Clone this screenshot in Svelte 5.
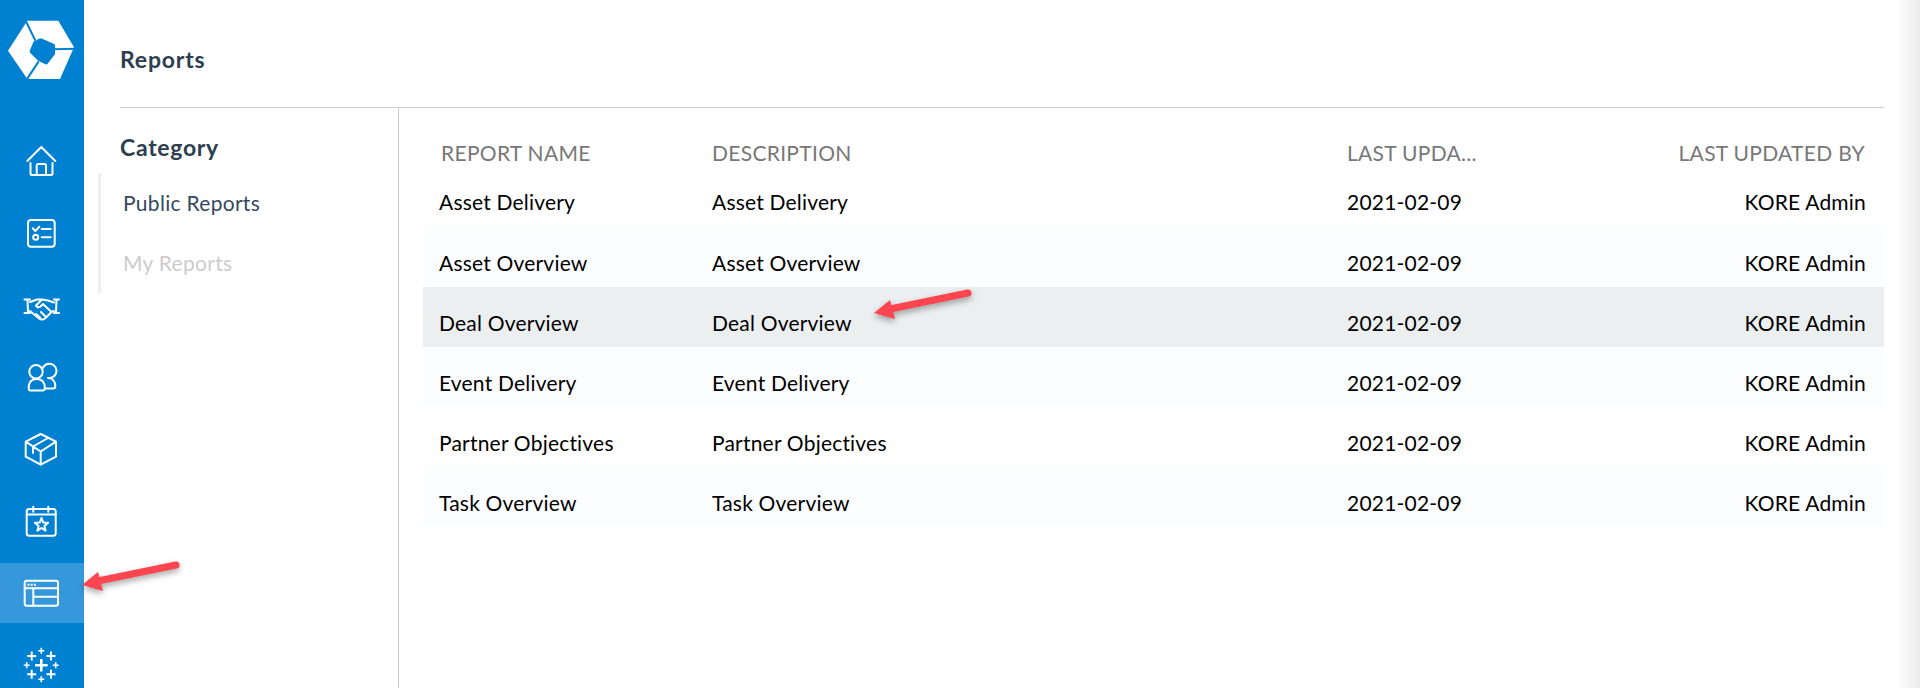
<script>
	const rows = [
		{ name: 'Asset Delivery' },
		{ name: 'Asset Overview' },
		{ name: 'Deal Overview', active: true },
		{ name: 'Event Delivery' },
		{ name: 'Partner Objectives' },
		{ name: 'Task Overview' }
	];
</script>

<div class="page">
	<nav class="sidebar">
		<div class="logo">
			<svg viewBox="0 0 210 240" width="70" height="80" aria-hidden="true">
				<polygon fill="#fff" points="58,32 151,32 198,112 156,207 58,207 0,122" />
				<path class="logo-cut" d="M52 30L82 92M200 116L138 118M92 154L56 209" />
				<polygon class="logo-blob" points="98,92 134,108 134,130 114,156 94,146 72,124 82,100" />
			</svg>
		</div>
		<a class="item" href="#home">
			<svg viewBox="0 0 44 44" width="44" height="44" aria-hidden="true">
				<path d="M7.3 22L21.3 8L35.3 22M10.5 24V34.5Q10.5 36 12 36H31Q32.5 36 32.5 34.5V24M16.7 36V26.5Q16.7 25 18 25H24.5Q26 25 26 26.5V36" />
			</svg>
		</a>
		<a class="item" href="#tasks">
			<svg viewBox="0 0 44 44" width="44" height="44" aria-hidden="true">
				<rect x="8" y="9" width="26.7" height="26.7" rx="3" />
				<path d="M12.7 17.3L15.3 20L19.3 15.7M21.7 18H30.7M21.7 26.3H30.7" />
				<circle cx="15.7" cy="26.3" r="2.5" />
			</svg>
		</a>
		<a class="item" href="#deals">
			<svg viewBox="0 0 44 44" width="44" height="44" aria-hidden="true">
				<path d="M4.5 16.5H10M4.5 30H10M7.5 16.5L8 30M39 16.5H34M39 30H34M36.5 16.5L36 30" />
				<path d="M10 19L17 16.5H22L28 17.5L34 19.5M22 16.5L16 22.5Q17.5 25.5 20.5 23.5L23 21L31.5 29L34 28M10 28L19 35.5Q22 37.5 25 35.5L31.5 29M16 31L20 34.5M21 29L25 33" />
			</svg>
		</a>
		<a class="item" href="#people">
			<svg viewBox="0 0 44 44" width="44" height="44" aria-hidden="true">
				<circle cx="16" cy="16.7" r="6.7" />
				<path d="M22.5 13.5A7.2 7.2 0 1 1 28 23" />
				<path d="M10.5 35.5H22.5Q24.8 35.5 24.8 33Q24.8 24 16.7 24Q8.7 24 8.7 33Q8.7 35.5 10.5 35.5Z" />
				<path d="M25 33.5H33Q35.3 33.5 35.3 31Q35.3 26 31 23.5" />
			</svg>
		</a>
		<a class="item" href="#assets">
			<svg viewBox="0 0 44 44" width="44" height="44" aria-hidden="true">
				<path d="M20.7 7L36 14.7V29.7L20.7 37.7L5.7 29.7V14.7ZM5.7 14.7L20.7 24.5L36 14.7M20.7 24.5V37.7M13 19.5L28 11M13 19.5V26" />
			</svg>
		</a>
		<a class="item" href="#events">
			<svg viewBox="0 0 44 44" width="44" height="44" aria-hidden="true">
				<rect x="6.7" y="10" width="29" height="26.7" rx="2.5" />
				<path d="M6.7 15.5H35.7M13.3 7.7V12.7M28.3 7.7V12.7" />
				<path d="M21.5 19L23.3 23.6L28.2 23.8L24.4 26.9L25.6 31.7L21.5 29L17.4 31.7L18.6 26.9L14.8 23.8L19.7 23.6Z" />
			</svg>
		</a>
		<a class="item active" href="#reports">
			<svg viewBox="0 0 44 44" width="44" height="44" aria-hidden="true">
				<rect x="4.7" y="9.7" width="33.3" height="25" rx="2" />
				<path d="M4.7 17.3H38M13.3 17.3V34.7M13.3 25.7H38" />
				<path class="dots" d="M7.5 13.7H9.5M10.7 13.7H12.7M13.9 13.7H15.9" />
			</svg>
		</a>
		<a class="item" href="#tableau">
			<svg viewBox="0 0 44 44" width="44" height="44" aria-hidden="true">
				<path class="thick" d="M21.3 16V28.6M15 22.3H27.6" />
				<path class="mid" d="M11.7 8.5V17.5M7.2 13H16.2M31 8.5V17.5M26.5 13H35.5M11.7 26.8V35.8M7.2 31.3H16.2M31 26.8V35.8M26.5 31.3H35.5" />
				<path class="thin" d="M21.3 4.7V10.7M18.3 7.7H24.3M21.3 33.3V39.3M18.3 36.3H24.3M6.7 19.3V25.3M3.7 22.3H9.7M35.7 19.3V25.3M32.7 22.3H38.7" />
			</svg>
		</a>
	</nav>

	<main class="main">
		<header class="topbar">
			<h1>Reports</h1>
		</header>
		<div class="body">
			<aside class="categories">
				<h2>Category</h2>
				<ul>
					<li class="current">Public Reports</li>
					<li>My Reports</li>
				</ul>
			</aside>
			<section class="table">
				<div class="thead">
					<span>REPORT NAME</span>
					<span>DESCRIPTION</span>
					<span>LAST UPDA...</span>
					<span class="end">LAST UPDATED BY</span>
				</div>
				{#each rows as row}
					<div class="row" class:active={row.active}>
						<span>{row.name}</span>
						<span>{row.name}</span>
						<span>2021-02-09</span>
						<span class="end">KORE Admin</span>
					</div>
				{/each}
			</section>
		</div>
	</main>

	<div class="edge"></div>

	<!-- annotation arrows on top of the screenshot -->
	<svg class="arrow arrow-nav" viewBox="0 0 110 40" width="110" height="40" aria-hidden="true">
		<g>
			<line x1="96" y1="6" x2="18" y2="22" />
			<polygon points="2,26 18,13 23,32" />
		</g>
	</svg>
	<svg class="arrow arrow-row" viewBox="0 0 110 40" width="110" height="40" aria-hidden="true">
		<g>
			<line x1="96" y1="6" x2="18" y2="22" />
			<polygon points="2,26 18,13 23,32" />
		</g>
	</svg>
</div>

<style>
	:global(body) {
		margin: 0;
		background: #fff;
	}

	.page {
		position: relative;
		display: flex;
		height: 688px;
		overflow: hidden;
		font-family: Lato, 'Noto Sans', sans-serif;
		font-size: 21px;
		letter-spacing: 0.3px;
		color: #000;
	}

	.sidebar {
		flex: 0 0 84px;
		display: flex;
		flex-direction: column;
		gap: 12px;
		background: #0080d0;
	}

	.logo {
		flex: 0 0 119px;
		padding: 10px 0 0 8px;
		box-sizing: border-box;
		line-height: 0;
	}

	.logo-cut {
		fill: none;
		stroke: #0080d0;
		stroke-width: 6;
	}

	.logo-blob {
		fill: #0080d0;
		stroke: #0080d0;
		stroke-width: 14;
		stroke-linejoin: round;
	}

	.item {
		flex: 0 0 60px;
		display: flex;
		align-items: center;
		padding-left: 20px;
	}

	.item.active {
		background: #3598db;
	}

	.item svg {
		fill: none;
		stroke: #fff;
		stroke-width: 2;
		stroke-linecap: round;
		stroke-linejoin: round;
	}

	.item .thick {
		stroke-width: 2.6;
		stroke-linecap: butt;
	}

	.item .mid {
		stroke-width: 2;
		stroke-linecap: butt;
	}

	.item .thin {
		stroke-width: 1.6;
		stroke-linecap: butt;
	}

	.item .dots {
		stroke-linecap: butt;
	}

	.main {
		flex: 1;
		display: flex;
		flex-direction: column;
		padding: 0 36px;
		min-width: 0;
	}

	.topbar {
		height: 107px;
		border-bottom: 1px solid #ccc;
		flex: none;
	}

	h1 {
		margin: 0;
		padding-top: 45px;
		font-size: 23px;
		font-weight: 700;
		line-height: 28px;
		letter-spacing: 0.8px;
		color: #2c3e50;
	}

	.body {
		flex: 1;
		display: flex;
	}

	.categories {
		flex: 0 0 278px;
		border-right: 1px solid #ccc;
	}

	h2 {
		margin: 0;
		padding-top: 25px;
		font-size: 23px;
		font-weight: 700;
		line-height: 28px;
		letter-spacing: 0.7px;
		color: #2c3e50;
	}

	ul {
		list-style: none;
		margin: 12px 0 0 -22px;
		padding: 0;
		width: 120px;
		border-left: 3px solid #eee;
	}

	li {
		height: 60px;
		padding: 18px 0 0 22px;
		box-sizing: border-box;
		line-height: 24px;
		white-space: nowrap;
		color: #ccc;
	}

	li.current {
		color: #34495e;
	}

	.table {
		flex: 1;
		padding-left: 24px;
	}

	.thead,
	.row {
		display: grid;
		grid-template-columns: 273px 635px 1fr auto;
		padding-left: 16px;
		padding-right: 18px;
	}

	.thead {
		height: 59px;
		padding-top: 32px;
		box-sizing: border-box;
		line-height: 26px;
		color: #777;
		padding-right: 19px;
	}

	.thead span:first-child {
		padding-left: 2px;
	}

	.row {
		height: 60px;
		padding-top: 24px;
		box-sizing: border-box;
		line-height: 24px;
		letter-spacing: 0.2px;
		align-content: start;
	}

	.thead + .row {
		padding-top: 23px;
	}

	.row:nth-child(odd) {
		background: #fcfdfe;
	}

	.row.active {
		background: #ebeff0;
	}

	.end {
		text-align: right;
	}

	.edge {
		position: absolute;
		top: 0;
		right: 0;
		bottom: 0;
		width: 24px;
		background: linear-gradient(to right, rgba(235, 235, 235, 0), #ebebeb);
	}

	.arrow {
		position: absolute;
		overflow: visible;
		filter: drop-shadow(0 3px 3px rgba(0, 0, 0, 0.35));
	}

	.arrow line {
		stroke: #ff4550;
		stroke-width: 7;
		stroke-linecap: round;
	}

	.arrow polygon {
		fill: #ff4550;
	}

	.arrow-nav {
		left: 80px;
		top: 559px;
	}

	.arrow-row {
		left: 872px;
		top: 287px;
	}
</style>
